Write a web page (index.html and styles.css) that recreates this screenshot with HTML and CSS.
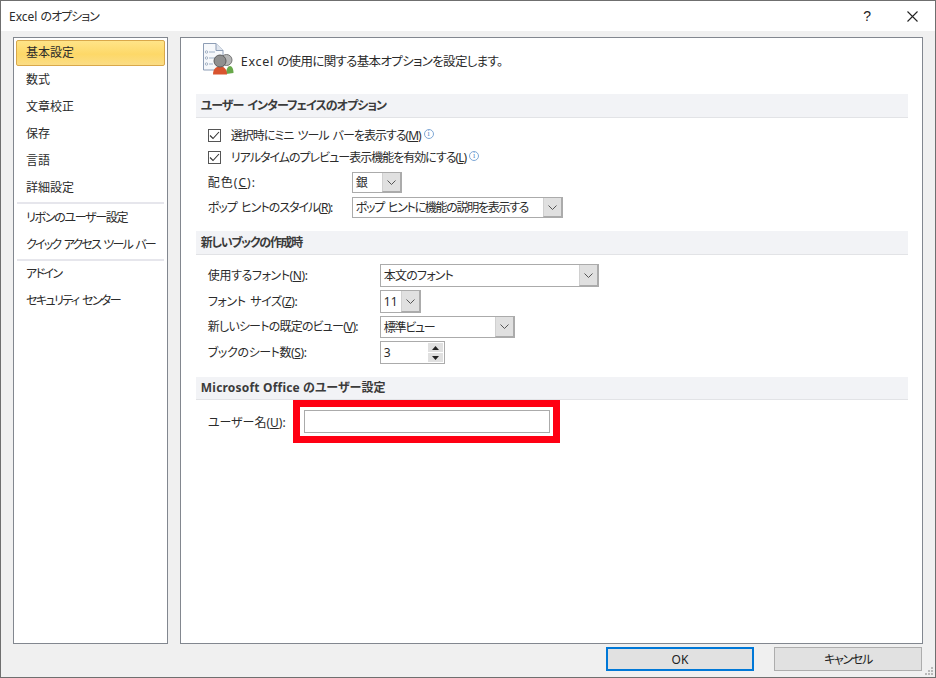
FILE: index.html
```html
<!DOCTYPE html>
<html lang="ja">
<head>
  <meta charset="UTF-8">
  <title>Excel のオプション</title>
  <link rel="stylesheet" href="styles.css">
</head>
<body>
  <div class="window">
    <div class="titlebar">
      <span class="title">Excel <span class="ls-10">のオプション</span></span>
      <span class="help">?</span>
      <svg class="close" width="11" height="11" viewBox="0 0 11 11"><path d="M0.5 0.5L10.5 10.5M10.5 0.5L0.5 10.5" stroke="#222" stroke-width="1.1" fill="none"/></svg>
    </div>

    <div class="main">
      <ul class="nav">
        <li class="active">基本設定</li>
        <li>数式</li>
        <li>文章校正</li>
        <li>保存</li>
        <li>言語</li>
        <li>詳細設定</li>
        <li class="divider"></li>
        <li class="ls-13">リボンのユーザー設定</li>
        <li class="ls-18">クイック アクセス ツール バー</li>
        <li class="divider"></li>
        <li class="ls-16">アドイン</li>
        <li class="ls-16">セキュリティ センター</li>
      </ul>

      <div class="content">
        <div class="intro">
          <svg width="34" height="34" viewBox="0 0 34 34">
            <path d="M1.5 0.5H14L21 7.5V27H1.5Z" fill="#f6f8fb" stroke="#8d9db5"/>
            <path d="M14 0.5V7.5H21" fill="#dfe5ee" stroke="#8d9db5"/>
            <path d="M7 9H13M7 15H13M7 21H11" stroke="#9fb0c6"/>
            <circle cx="4.5" cy="9" r="1.2" fill="#fff" stroke="#7f93ad" stroke-width="0.7"/>
            <circle cx="4.5" cy="15" r="1.2" fill="#fff" stroke="#7f93ad" stroke-width="0.7"/>
            <circle cx="4.5" cy="21" r="1.2" fill="#fff" stroke="#7f93ad" stroke-width="0.7"/>
            <path d="M24 31C24 26 26 23 28 23C30 23 31.5 26 31.5 30Z" fill="#68a84a"/>
            <circle cx="24.5" cy="17" r="5.5" fill="#b5b5b5" stroke="#777"/>
            <path d="M11 31.5C11 26 14 23.5 18 23.5C22 23.5 25 26 25 31.5Z" fill="#d9542f"/>
            <circle cx="18" cy="18" r="6" fill="#8f8f8f" stroke="#5c5c5c"/>
          </svg>
          <span><span class="latin">Excel</span> <span class="ls-6">の使用に関する基本オプションを設定します。</span></span>
        </div>

        <h3 class="section first"><span class="ls-10">ユーザー インターフェイスのオプション</span></h3>
        <div class="check-row">
          <span class="checkbox"><svg width="11" height="9" viewBox="0 0 11 9"><path d="M1 4.5L4 7.5L10 1" stroke="#333" stroke-width="1.1" fill="none"/></svg></span>
          <span class="ls-10">選択時にミニ ツール バーを表示する(<u>M</u>)</span>
          <span class="info">i</span>
        </div>
        <div class="check-row">
          <span class="checkbox"><svg width="11" height="9" viewBox="0 0 11 9"><path d="M1 4.5L4 7.5L10 1" stroke="#333" stroke-width="1.1" fill="none"/></svg></span>
          <span class="ls-10">リアルタイムのプレビュー表示機能を有効にする(<u>L</u>)</span>
          <span class="info">i</span>
        </div>
        <div class="row short label-143 after-checks">
          <label class="wide">配色(<u>C</u>):</label>
          <div class="select w-50"><span>銀</span><b class="arrow"><svg width="9" height="5" viewBox="0 0 9 5"><path d="M0.5 0.5L4.5 4.5L8.5 0.5" stroke="#555" fill="none"/></svg></b></div>
        </div>
        <div class="row short label-143 gap-4">
          <label class="ls-10">ポップ ヒントのスタイル(<u>R</u>):</label>
          <div class="select w-211"><span class="ls-13">ポップ ヒントに機能の説明を表示する</span><b class="arrow"><svg width="9" height="5" viewBox="0 0 9 5"><path d="M0.5 0.5L4.5 4.5L8.5 0.5" stroke="#555" fill="none"/></svg></b></div>
        </div>

        <h3 class="section second"><span class="ls-13">新しいブックの作成時</span></h3>
        <div class="row label-171 top-9">
          <label class="ls-4">使用するフォント(<u>N</u>):</label>
          <div class="select w-219"><span class="ls-8">本文のフォント</span><b class="arrow"><svg width="9" height="5" viewBox="0 0 9 5"><path d="M0.5 0.5L4.5 4.5L8.5 0.5" stroke="#555" fill="none"/></svg></b></div>
        </div>
        <div class="row label-171 gap-3">
          <label class="ls-4">フォント サイズ(<u>Z</u>):</label>
          <div class="select w-41"><span>11</span><b class="arrow"><svg width="9" height="5" viewBox="0 0 9 5"><path d="M0.5 0.5L4.5 4.5L8.5 0.5" stroke="#555" fill="none"/></svg></b></div>
        </div>
        <div class="row label-171 gap-3 view-row">
          <label class="ls-8">新しいシートの既定のビュー(<u>V</u>):</label>
          <div class="select w-135"><span class="ls-13">標準ビュー</span><b class="arrow"><svg width="9" height="5" viewBox="0 0 9 5"><path d="M0.5 0.5L4.5 4.5L8.5 0.5" stroke="#555" fill="none"/></svg></b></div>
        </div>
        <div class="row label-171 gap-3">
          <label class="ls-4">ブックのシート数(<u>S</u>):</label>
          <div class="spinner">
            <span>3</span>
            <div class="spin-btns">
              <b><svg width="7" height="4" viewBox="0 0 7 4"><path d="M3.5 0L7 4H0Z" fill="#222"/></svg></b>
              <b><svg width="7" height="4" viewBox="0 0 7 4"><path d="M0 0H7L3.5 4Z" fill="#222"/></svg></b>
            </div>
          </div>
        </div>

        <h3 class="section third"><span class="latin-bold">Microsoft Office</span> のユーザー設定</h3>
        <div class="user-row">
          <label>ユーザー名(<u>U</u>):</label>
          <div class="highlight"><input class="username" type="text"></div>
        </div>
      </div>
    </div>

    <div class="footer">
      <button class="button default">OK</button>
      <button class="button"><span class="ls-13">キャンセル</span></button>
      <svg class="grip" width="8" height="8" viewBox="0 0 8 8"><path d="M6 0h2v2H6zM3 3h2v2H3zM6 3h2v2H6zM0 6h2v2H0zM3 6h2v2H3zM6 6h2v2H6z" fill="#b9b9b9"/></svg>
    </div>
  </div>
</body>
</html>
```

FILE: styles.css
```css
* {
  box-sizing: border-box;
}
body {
  margin: 0;
  font-family: "Noto Sans", "Noto Sans CJK JP", sans-serif;
  font-size: 12px;
  font-feature-settings: "palt";
  color: #2b2b2b;
}
/* kana in the original font is narrower than Noto's */
.ls-4 {
  letter-spacing: -.4px;
  word-spacing: 2px;
}
.ls-6 {
  letter-spacing: -.65px;
}
.ls-8 {
  letter-spacing: -.8px;
  word-spacing: 2px;
}
.ls-10 {
  letter-spacing: -1px;
  word-spacing: 2px;
}
.ls-13 {
  letter-spacing: -1.3px;
  word-spacing: 2px;
}
.ls-16 {
  letter-spacing: -1.6px;
  word-spacing: 2px;
}
.ls-18 {
  letter-spacing: -1.8px;
  word-spacing: 2px;
}
.wide {
  letter-spacing: 1px;
}
.latin {
  letter-spacing: .7px;
}
.latin-bold {
  letter-spacing: .2px;
}

.window {
  position: relative;
  width: 936px;
  height: 678px;
  border: 1px solid #6f6f6f;
  background-color: #f0f0f0;
  overflow: hidden;
}
.titlebar {
  display: flex;
  align-items: center;
  height: 30px;
  padding-left: 8px;
  background-color: #fff;
}
.help {
  margin-left: auto;
  font-size: 14px;
  font-family: "Liberation Sans", sans-serif;
  color: #222;
}
.close {
  margin-left: 36px;
  margin-right: 17px;
}

.main {
  display: flex;
  gap: 12px;
  height: 607px;
  margin: 6px 12px 0;
}
.nav {
  width: 155px;
  margin: 0;
  padding: 2px;
  list-style: none;
  background-color: #fff;
  border: 1px solid #82878f;
}
.nav li {
  height: 27px;
  padding-left: 10px;
  line-height: 26px;
  white-space: nowrap;
}
.nav li.active {
  height: 26px;
  margin-bottom: 1px;
  line-height: 24px;
  border: 1px solid #d9a84a;
  border-radius: 2px;
  padding-left: 9px;
  background: linear-gradient(#ffe488, #fdd868 55%, #fbdd85);
}
.nav li.divider {
  height: 2px;
  margin: 0 1px;
  background-color: #e6e6ec;
}
.nav li.divider:nth-child(7) {
  margin-bottom: 1px;
}

.content {
  width: 744px;
  padding: 0 14px 0 15px;
  background-color: #fff;
  border: 1px solid #82878f;
}
.intro {
  display: flex;
  align-items: center;
  gap: 5px;
  height: 34px;
  margin-top: 5px;
  padding-left: 6px;
  font-size: 12.5px;
}
.section {
  height: 24px;
  margin: 0;
  padding-left: 5px;
  font-size: 12px;
  font-weight: bold;
  line-height: 24px;
  color: #3b3b3b;
  background-color: #f2f3f6;
  border-bottom: 1px solid #e2e3e6;
}
.section.first {
  margin-top: 17px;
  margin-bottom: 6px;
}
.section.second {
  margin-top: 13px;
}
.section.third {
  height: 23px;
  line-height: 22px;
  margin-top: 13px;
}

.check-row {
  display: flex;
  align-items: center;
  height: 22px;
  padding-left: 12px;
}
.checkbox {
  display: flex;
  justify-content: center;
  align-items: center;
  width: 13px;
  height: 13px;
  margin-right: 10px;
  border: 1px solid #555;
  background-color: #fff;
}
.info {
  width: 10px;
  height: 10px;
  margin-left: 3px;
  margin-top: -3px;
  border: 1px solid #7fa8d6;
  border-radius: 50%;
  font-family: "Liberation Serif", serif;
  font-size: 8px;
  line-height: 8px;
  text-align: center;
  color: #4f86c6;
}

.row {
  display: flex;
  align-items: center;
  height: 23px;
  padding-left: 12px;
}
.row.short {
  height: 21px;
}
.row.view-row {
  height: 22px;
}
.row label {
  flex: none;
  padding-bottom: 2px;
}
.label-143 label {
  width: 144px;
}
.label-171 label {
  width: 172px;
}
.after-checks {
  margin-top: 4px;
}
.gap-4 {
  margin-top: 4px;
}
.gap-3 {
  margin-top: 3px;
}
.top-9 {
  margin-top: 9px;
}

.select,
.spinner {
  display: flex;
  align-items: center;
  height: 100%;
  padding-left: 3px;
  background-color: #fff;
  border: 1px solid #ababab;
}
.select > span,
.spinner > span {
  padding-bottom: 1px;
  white-space: nowrap;
}
.select .arrow {
  display: flex;
  justify-content: center;
  align-items: center;
  width: 19px;
  height: 100%;
  margin-left: auto;
  background-color: #e0e0e0;
  border-left: 1px solid #d0d0d0;
  border-right: 1px solid #ababab;
  border-bottom: 1px solid #ababab;
}
.w-50 {
  width: 50px;
}
.w-211 {
  width: 211px;
}
.w-219 {
  width: 219px;
}
.w-41 {
  width: 41px;
}
.w-135 {
  width: 135px;
}
.spinner {
  width: 65px;
}
.spin-btns {
  display: flex;
  flex-direction: column;
  gap: 1px;
  margin-left: auto;
  margin-right: 1px;
}
.spin-btns b {
  display: flex;
  justify-content: center;
  align-items: center;
  width: 15px;
  height: 9px;
  background-color: #e0e0e0;
}

.user-row {
  display: flex;
  align-items: center;
  height: 43px;
  padding-left: 12px;
}
.user-row label {
  width: 85px;
}
.highlight {
  width: 267px;
  height: 43px;
  padding: 3px 3px 3px 4px;
  border: 7px solid #ff0013;
  background-color: #fff;
}
.username {
  display: block;
  width: 100%;
  height: 23px;
  border: 1px solid #ababab;
  background-color: #fff;
  outline: none;
}

.footer {
  display: flex;
  justify-content: flex-end;
  gap: 20px;
  margin-top: 3px;
  padding-right: 13px;
}
.button {
  width: 148px;
  height: 24px;
  padding: 0;
  font-family: inherit;
  font-size: 12px;
  font-feature-settings: inherit;
  color: #222;
  background-color: #e1e1e1;
  border: 1px solid #adadad;
}
.button.default {
  border: 2px solid #0078d7;
}
.grip {
  position: absolute;
  right: 2px;
  bottom: 2px;
}
```
